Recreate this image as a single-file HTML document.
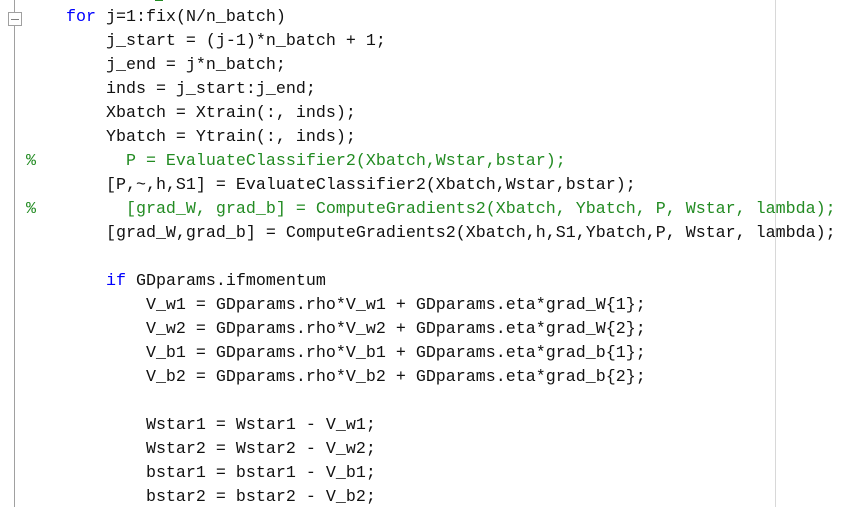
<!DOCTYPE html>
<html><head><meta charset="utf-8"><style>
html,body{margin:0;padding:0;background:#fff;width:847px;height:507px;overflow:hidden;position:relative}
pre{position:absolute;left:26px;top:6px;margin:0;font-family:"Liberation Mono","Courier New",monospace;font-size:16.67px;line-height:24px;color:#111}
.k{color:#0000ff}.c{color:#228b22}
.gut{position:absolute;left:14px;top:0;width:1px;height:507px;background:#a0a0a0}
.box{position:absolute;left:8px;top:12px;width:12px;height:12px;border:1px solid #a0a0a0;background:#fff}
.box:after{content:"";position:absolute;left:2px;top:6px;width:8px;height:1px;background:#808080}
.rm{position:absolute;left:775px;top:0;width:1px;height:507px;background:#d8d8d8}
.tp{position:absolute;left:155px;top:0;width:8px;height:1px;background:#228b22}
</style></head><body>
<div class="gut"></div><div class="box"></div><div class="rm"></div><div class="tp"></div>
<pre>    <span class="k">for</span> j=1:fix(N/n_batch)
        j_start = (j-1)*n_batch + 1;
        j_end = j*n_batch;
        inds = j_start:j_end;
        Xbatch = Xtrain(:, inds);
        Ybatch = Ytrain(:, inds);
<span class="c">%         P = EvaluateClassifier2(Xbatch,Wstar,bstar);</span>
        [P,~,h,S1] = EvaluateClassifier2(Xbatch,Wstar,bstar);
<span class="c">%         [grad_W, grad_b] = ComputeGradients2(Xbatch, Ybatch, P, Wstar, lambda);</span>
        [grad_W,grad_b] = ComputeGradients2(Xbatch,h,S1,Ybatch,P, Wstar, lambda);

        <span class="k">if</span> GDparams.ifmomentum
            V_w1 = GDparams.rho*V_w1 + GDparams.eta*grad_W{1};
            V_w2 = GDparams.rho*V_w2 + GDparams.eta*grad_W{2};
            V_b1 = GDparams.rho*V_b1 + GDparams.eta*grad_b{1};
            V_b2 = GDparams.rho*V_b2 + GDparams.eta*grad_b{2};

            Wstar1 = Wstar1 - V_w1;
            Wstar2 = Wstar2 - V_w2;
            bstar1 = bstar1 - V_b1;
            bstar2 = bstar2 - V_b2;
</pre>
</body></html>
